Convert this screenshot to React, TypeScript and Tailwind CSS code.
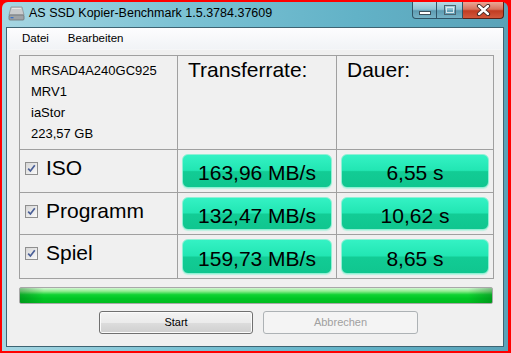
import React from "react";

const font = { fontFamily: '"Liberation Sans", Arial, sans-serif' };

type Row = { label: string; rate: string; time: string };

const rows: Row[] = [
  { label: "ISO", rate: "163,96 MB/s", time: "6,55 s" },
  { label: "Programm", rate: "132,47 MB/s", time: "10,62 s" },
  { label: "Spiel", rate: "159,73 MB/s", time: "8,65 s" },
];

const rowHeights = ["h-[43px]", "h-[42px]", "h-[44px]"];

function DriveIcon() {
  return (
    <svg width="17" height="15" viewBox="0 0 17 15">
      <path d="M3 1 H14 L16 9 H1 Z" fill="#c9cccd" stroke="#8a9093" strokeWidth="0.8" />
      <rect x="1" y="9" width="15" height="5" rx="1" fill="#9ea3a6" stroke="#6f7477" strokeWidth="0.8" />
      <rect x="2.5" y="11" width="3" height="1.3" fill="#3a73c8" />
      <path d="M4 2.5 H13" stroke="#e6e8e9" strokeWidth="1" />
    </svg>
  );
}

function Checkbox() {
  return (
    <div className="w-[13px] h-[13px] shrink-0 border border-[#8f8f8f] bg-[linear-gradient(135deg,#d6d6d6,#fafafa)] flex items-center justify-center">
      <svg width="9" height="9" viewBox="0 0 9 9">
        <path d="M1.2 4.6 L3.4 7 L7.8 1.2" fill="none" stroke="#4a5f97" strokeWidth="1.7" />
      </svg>
    </div>
  );
}

function GreenBox({ text }: { text: string }) {
  return (
    <div className="h-full w-full rounded-[6px] border border-[#8ff0d4] bg-[linear-gradient(to_bottom,#34f2c4_0%,#22e6b3_48%,#12cc95_52%,#10c68f_100%)] shadow-[0_1px_1px_#b8f2e0] flex items-center justify-center text-[21px] text-black leading-none pt-[3px]">
      {text}
    </div>
  );
}

const glassBtn =
  "bg-[linear-gradient(to_bottom,#b6d9e4_0%,#8fc2d3_45%,#5e9cb2_55%,#76b3c6_100%)]";

export default function App() {
  return (
    <div className="w-[511px] h-[353px] bg-[#ff0000] pt-[2px] pl-[2px] pr-[3px] pb-[2px]" style={font}>
      <div className="h-full w-full flex flex-col bg-[linear-gradient(to_right,#a6d6e2_0%,#7cc2d4_35%,#62b2c7_70%,#5aa2b8_100%)] rounded-t-[6px]">
        {/* title bar */}
        <div className="h-[25px] flex items-start">
          <div className="pl-[6px] pt-[4px]">
            <DriveIcon />
          </div>
          <div className="pl-[4px] pt-[5px] text-[12.5px] text-black leading-none">
            AS SSD Kopier-Benchmark 1.5.3784.37609
          </div>
          <div className="ml-auto mr-[4px] flex h-[17px]">
            <div className={`w-[25px] h-full border border-[#2f5466] border-t-0 rounded-bl-[4px] ${glassBtn} flex items-center justify-center`}>
              <div className="w-[12px] h-[4px] bg-white border border-[#3c4e58] mt-[5px]" />
            </div>
            <div className={`w-[26px] h-full border-b border-r border-[#2f5466] ${glassBtn} flex items-center justify-center`}>
              <div className="w-[12px] h-[10px] border border-[#4c6470] p-[1px]">
                <div className="w-full h-full border-[1.5px] border-[#dbe8ed]" />
              </div>
            </div>
            <div className="w-[41px] h-full border-b border-r border-[#5a1f16] rounded-br-[4px] bg-[linear-gradient(to_bottom,#eaa797_0%,#d8735e_45%,#c23c22_55%,#d2583c_100%)] flex items-center justify-center">
              <svg width="15" height="12" viewBox="0 0 15 12">
                <path d="M3 2 L12 10 M12 2 L3 10" stroke="#3a2420" strokeWidth="4.2" strokeLinecap="round" />
                <path d="M3 2 L12 10 M12 2 L3 10" stroke="#ffffff" strokeWidth="2.4" strokeLinecap="round" />
              </svg>
            </div>
          </div>
        </div>

        {/* client area */}
        <div className="mx-[4px] mb-[4px] h-[320px] border border-[#3e6473] bg-[#f0f0f0] flex flex-col">
          <div className="h-[22px] flex items-center text-[11.5px] text-black bg-[linear-gradient(to_bottom,#fdfdfe,#f1f3f6)] border-b border-[#f5f6f7]">
            <span className="ml-[15px]">Datei</span>
            <span className="ml-[19px]">Bearbeiten</span>
          </div>

          <div className="pl-[12px] pt-[5px] flex flex-col">
            {/* table */}
            <div className="w-[475px] border-l border-t border-[#a0a0a0] flex flex-col">
              <div className="h-[94px] flex">
                <div className="w-[158px] border-r border-b border-[#a0a0a0] pl-[11px] pt-[4px] text-[13px] leading-[21px] text-black">
                  <div>MRSAD4A240GC925</div>
                  <div>MRV1</div>
                  <div>iaStor</div>
                  <div>223,57 GB</div>
                </div>
                <div className="w-[159px] border-r border-b border-[#a0a0a0] pl-[10px] pt-[2px] text-[21px] leading-[24px] text-black">
                  Transferrate:
                </div>
                <div className="w-[157px] border-r border-b border-[#a0a0a0] pl-[10px] pt-[2px] text-[21px] leading-[24px] text-black">
                  Dauer:
                </div>
              </div>
              {rows.map((row, i) => (
                <div key={row.label} className={`flex ${rowHeights[i]}`}>
                  <div className="w-[158px] border-r border-b border-[#a0a0a0]">
                    <div className="h-[36px] flex items-center pl-[5px] gap-[8px] text-[21px] text-black">
                      <Checkbox />
                      <span>{row.label}</span>
                    </div>
                  </div>
                  <div className="w-[159px] border-r border-b border-[#a0a0a0] p-[4px]">
                    <GreenBox text={row.rate} />
                  </div>
                  <div className="w-[157px] border-r border-b border-[#a0a0a0] p-[4px]">
                    <GreenBox text={row.time} />
                  </div>
                </div>
              ))}
            </div>

            {/* progress */}
            <div className="mt-[8px] w-[474px] h-[17px] rounded-[2px] border border-[#a8a8a8] bg-[linear-gradient(to_bottom,#d4f7d4_0%,#8eec8e_22%,#10d232_45%,#00c624_70%,#00bc1e_100%)] relative overflow-hidden">
              <div className="absolute left-0 top-0 h-full w-[24px] bg-[linear-gradient(to_right,rgba(0,90,20,0.35),rgba(0,90,20,0))]" />
              <div className="absolute right-0 top-0 h-full w-[24px] bg-[linear-gradient(to_left,rgba(0,90,20,0.35),rgba(0,90,20,0))]" />
            </div>

            {/* buttons */}
            <div className="mt-[7px] flex gap-[10px] pl-[80px]">
              <div className="w-[154px] h-[23px] rounded-[3px] border border-[#707070] bg-[linear-gradient(to_bottom,#f3f3f3_0%,#ebebeb_50%,#dddddd_50%,#cfcfcf_100%)] shadow-[inset_0_0_0_1px_#fbfbfb] flex items-center justify-center text-[11px] text-black">
                Start
              </div>
              <div className="w-[155px] h-[23px] rounded-[3px] border border-[#adb2b5] bg-[#f4f4f4] flex items-center justify-center text-[11px] text-[#a0a0a0]">
                Abbrechen
              </div>
            </div>
          </div>
        </div>
      </div>
    </div>
  );
}
